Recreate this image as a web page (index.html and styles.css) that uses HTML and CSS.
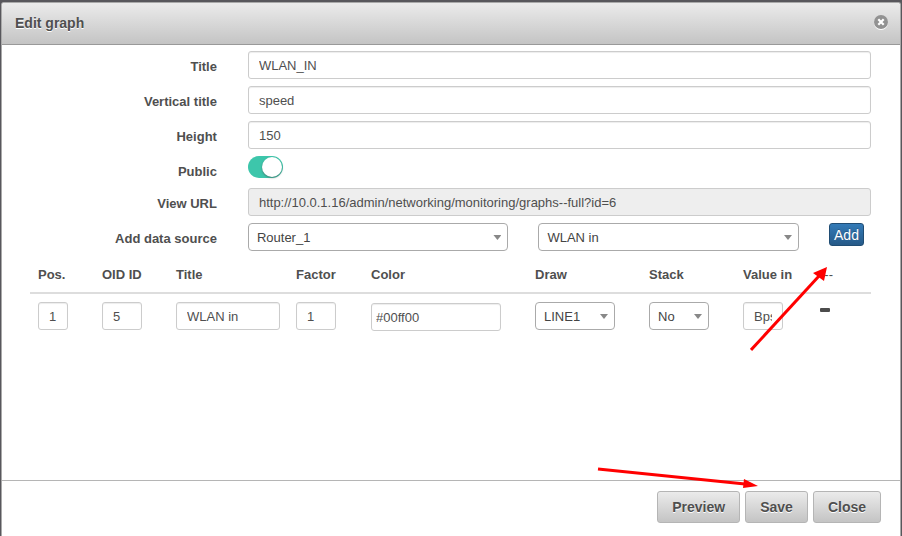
FILE: index.html
```html
<!DOCTYPE html>
<html lang="en">
<head>
<meta charset="utf-8">
<title>Edit graph</title>
<link rel="stylesheet" href="styles.css">
</head>
<body>
<form class="dialog">
  <header class="dialog-header">
    <h1 class="dialog-title">Edit graph</h1>
    <button class="close-icon" type="button" aria-label="Close dialog">
      <svg viewBox="0 0 14 14" width="14" height="14"><path d="M4.3 4.3l5.4 5.4M9.7 4.3l-5.4 5.4" stroke="#fff" stroke-width="2.2"/></svg>
    </button>
  </header>
  <main class="dialog-body">
    <div class="fields">
      <label class="field-label" for="title">Title</label>
      <input class="input" id="title" type="text" value="WLAN_IN">
      <label class="field-label" for="vtitle">Vertical title</label>
      <input class="input" id="vtitle" type="text" value="speed">
      <label class="field-label" for="height">Height</label>
      <input class="input" id="height" type="text" value="150">
      <label class="field-label" for="public">Public</label>
      <div class="switch-cell"><input class="switch" id="public" type="checkbox" role="switch" checked></div>
      <label class="field-label" for="url">View URL</label>
      <input class="input readonly" id="url" type="text" value="http://10.0.1.16/admin/networking/monitoring/graphs--full?id=6" readonly>
      <label class="field-label" for="source">Add data source</label>
      <div class="source">
        <div class="select-wrap"><select class="select" id="source"><option>Router_1</option></select></div>
        <div class="select-wrap"><select class="select" aria-label="Data source item"><option>WLAN in</option></select></div>
        <button class="add" type="button">Add</button>
      </div>
    </div>
    <table class="sources">
      <colgroup><col class="c-pos"><col class="c-oid"><col class="c-title"><col class="c-factor"><col class="c-color"><col class="c-draw"><col class="c-stack"><col class="c-value"><col class="c-remove"></colgroup>
      <thead>
        <tr><th>Pos.</th><th>OID ID</th><th>Title</th><th>Factor</th><th>Color</th><th>Draw</th><th>Stack</th><th>Value in</th><th class="plain">---</th></tr>
      </thead>
      <tbody>
        <tr>
          <td><input class="input w-pos" type="text" value="1" aria-label="Position"></td>
          <td><input class="input w-small" type="text" value="5" aria-label="OID ID"></td>
          <td><input class="input" type="text" value="WLAN in" aria-label="Source title"></td>
          <td><input class="input w-small" type="text" value="1" aria-label="Factor"></td>
          <td><input class="input w-color" type="text" value="#00ff00" aria-label="Color"></td>
          <td><div class="select-wrap w-draw"><select class="select" aria-label="Draw"><option>LINE1</option></select></div></td>
          <td><div class="select-wrap w-stack"><select class="select" aria-label="Stack"><option>No</option></select></div></td>
          <td><input class="input w-small" type="text" value="Bps" aria-label="Value in"></td>
          <td class="remove-cell"><button class="remove" type="button" aria-label="Remove"></button></td>
        </tr>
      </tbody>
    </table>
  </main>
  <footer class="dialog-footer">
    <button class="action" type="button">Preview</button>
    <button class="action" type="submit">Save</button>
    <button class="action" type="button">Close</button>
  </footer>
  <svg class="arrow arrow-add" viewBox="0 0 78 86" width="78" height="86" aria-hidden="true"><path d="M1 84L69 10" stroke="#f00" stroke-width="3"/><path d="M77 1L74 15L63 7Z" fill="#f00"/></svg>
  <svg class="arrow arrow-save" viewBox="0 0 162 22" width="162" height="22" aria-hidden="true"><path d="M1 3L148 18" stroke="#f00" stroke-width="3"/><path d="M161 20L147 13L146 22Z" fill="#f00"/></svg>
</form>
</body>
</html>
```
FILE: styles.css
```css
* {
  box-sizing: border-box;
}

body {
  margin: 0;
  background: #58575c;
  color: #4f4f4f;
  font: 13px/20px "Liberation Sans", Arial, sans-serif;
}

button,
input,
select {
  margin: 0;
  font: inherit;
  color: inherit;
}

.dialog {
  position: relative;
  display: flex;
  flex-direction: column;
  min-height: calc(100vh - 2px);
  margin: 2px 1px 0;
  border: 1px solid #a9a9a9;
  border-bottom: 0;
  border-radius: 3px 3px 0 0;
  background: #fff;
}

.dialog-header {
  display: flex;
  justify-content: space-between;
  padding: 10px 13px 11px;
  border-bottom: 1px solid #999;
  border-radius: 2px 2px 0 0;
  background: linear-gradient(#ebebeb, #c4c4c4);
}

.dialog-title {
  margin: 0;
  font-size: 14px;
  line-height: 20px;
  text-shadow: 0 1px 0 #fff;
}

.close-icon {
  display: flex;
  width: 14px;
  height: 14px;
  margin-top: 2px;
  margin-right: -1px;
  padding: 0;
  border: 0;
  border-radius: 50%;
  background: #929292;
  box-shadow: 0 1px 0 #fff;
}

.dialog-body {
  flex: 1;
  padding: 6px 29px 20px 28px;
}

.fields {
  display: grid;
  grid-template-columns: 30fr 100fr;
  column-gap: 31px;
  row-gap: 7px;
}

.field-label {
  padding-top: 7px;
  font-weight: bold;
  line-height: 18px;
  text-align: right;
}

.input {
  display: block;
  width: 100%;
  height: 28px;
  padding: 0 10px;
  border: 1px solid #ccc;
  border-radius: 3px;
  background: #fff;
  box-shadow: inset 0 1px 1px #ededed;
}

.readonly {
  background: #eee;
}

.switch-cell {
  display: flex;
  height: 25px;
}

.switch {
  width: 35px;
  height: 22px;
  padding: 1px;
  border-radius: 11px;
  background: #3dc6ab;
  appearance: none;
}

.switch::before {
  content: "";
  display: block;
  width: 20px;
  height: 20px;
  margin-left: auto;
  border-radius: 50%;
  background: #fff;
  box-shadow: 0 1px 2px #4448;
}

.source {
  display: grid;
  grid-template-columns: 1fr 1fr 42px;
  column-gap: 30px;
  align-items: start;
}

.select-wrap {
  position: relative;
}

.select-wrap::after {
  content: "";
  position: absolute;
  top: 12px;
  right: 7px;
  width: 8px;
  height: 5px;
  background: #888;
  clip-path: polygon(0 0, 100% 0, 50% 100%);
  pointer-events: none;
}

.select {
  display: block;
  width: 100%;
  height: 28px;
  padding: 2px 20px 0 8px;
  border: 1px solid #aaa;
  border-radius: 4px;
  background: #fff;
  color: #444;
  appearance: none;
}

.add {
  justify-self: start;
  width: 35px;
  height: 23px;
  padding: 0;
  border: 1px solid #204d74;
  border-radius: 3px;
  background: linear-gradient(#337ab7, #265a88);
  color: #fff;
  font-size: 14px;
  text-shadow: 0 -1px 0 #0003;
}

.sources {
  width: 100%;
  margin-top: 5px;
  border-collapse: collapse;
  table-layout: fixed;
}

.c-pos { width: 64px; }
.c-oid { width: 74px; }
.c-title { width: 120px; }
.c-factor { width: 75px; }
.c-draw { width: 114px; }
.c-stack { width: 94px; }
.c-value { width: 77px; }
.c-remove { width: 59px; }

.sources th {
  padding: 9px 8px 7px;
  border-bottom: 2px solid #ddd;
  text-align: left;
  white-space: nowrap;
}

.sources .plain {
  font-weight: normal;
}

.sources td {
  padding: 8px;
  vertical-align: top;
}

.w-pos { width: 30px; }
.w-small { width: 40px; }
.w-draw { width: 80px; }
.w-stack { width: 60px; }

.w-color {
  width: 130px;
  margin-top: 1px;
  padding: 0 4px;
}

.sources .remove-cell {
  padding: 14px 8px;
}

.remove {
  display: block;
  width: 10px;
  height: 4px;
  padding: 0;
  border: 0;
  border-radius: 1px;
  background: #4c4c4c;
}

.dialog-footer {
  display: flex;
  justify-content: flex-end;
  gap: 5px;
  padding: 10px 19px 13px;
  border-top: 1px solid #b5b5b5;
}

.action {
  height: 32px;
  padding: 0 14px;
  border: 1px solid #b5b5b5;
  border-radius: 3px;
  background: linear-gradient(#ebebeb, #c4c4c4);
  font-size: 14px;
  font-weight: bold;
  text-shadow: 0 1px 0 #fff;
}

.arrow {
  position: absolute;
  fill: none;
  pointer-events: none;
}

.arrow-add {
  top: 263px;
  right: 72px;
}

.arrow-save {
  right: 141px;
  bottom: 48px;
}
```
